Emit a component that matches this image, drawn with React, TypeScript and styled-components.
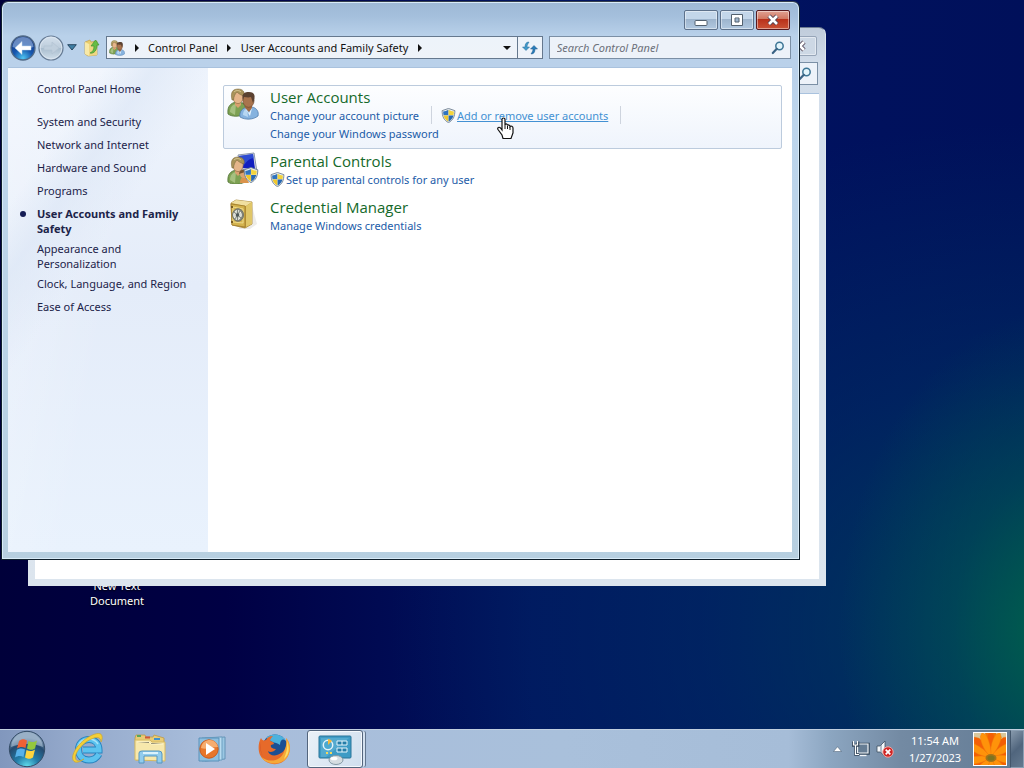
import React from 'react';
import styled, { createGlobalStyle, css } from 'styled-components';

const Global = createGlobalStyle`
  * { box-sizing: border-box; }
  html, body { margin: 0; height: 100%; overflow: hidden; }
  body, button, input {
    font-family: "Noto Sans", "Open Sans", sans-serif;
    font-size: 11px;
    line-height: 15px;
  }
  button { border: 0; padding: 0; background: none; }
  svg { display: block; flex: none; }
`;

const Screen = styled.div`
  display: flex;
  flex-direction: column;
  height: 100vh;
  background:
    radial-gradient(ellipse 22% 42% at 104% 82%, rgba(0, 104, 72, 0.85), rgba(0, 90, 80, 0.4) 50%, transparent 100%),
    radial-gradient(ellipse 62% 66% at 100% 82%, rgba(0, 70, 92, 0.8), rgba(0, 60, 100, 0.4) 50%, transparent 100%),
    linear-gradient(90deg, #00003a 0%, #000044 22%, #001460 52%, #001260 72%, #00105a 100%);
`;

const Desktop = styled.main`
  position: relative;
  flex: 1;
`;

const DesktopFile = styled.button`
  position: absolute;
  left: 77px;
  top: 578px;
  width: 80px;
  color: #fff;
  text-align: center;
  text-shadow: 0 1px 2px #000;
`;

const WindowFrame = styled.section<{ $active?: boolean }>`
  position: absolute;
  display: flex;
  flex-direction: column;
  border-radius: 7px 7px 0 0;
  ${({ $active }) => $active ? css`
    top: 1px;
    left: 1px;
    right: 224px;
    bottom: 169px;
    padding: 0 7px 7px 6px;
    border: 1px solid #10202c;
    border-top-color: #35404e;
    box-shadow: inset 0 0 0 1px #d9ebf8;
    background: linear-gradient(#9db8d5 0, #a4bfdc 14px, #b9d1ea 34px, #bad1ea 66px, #bdd5ec 120px, #b7cfe0 100%);
  ` : css`
    top: 27px;
    left: 28px;
    right: 198px;
    bottom: 143px;
    padding: 0 6px 6px;
    border: 1px solid #dde5ec;
    border-top-color: #6d7c92;
    background: linear-gradient(#c0ccdb 0, #d3deeb 40px, #dce5ee 100%);
  `}
`;

const TitleBar = styled.header`
  display: flex;
  justify-content: flex-end;
  gap: 2px;
  padding: 8px 2px 6px;
`;

const CaptionButton = styled.button<{ $kind?: 'close' | 'faded' }>`
  display: grid;
  place-items: center;
  width: 34px;
  height: 20px;
  border: 1px solid #5d718b;
  border-radius: 2px;
  box-shadow: inset 0 0 0 1px rgba(255, 255, 255, 0.45);
  background: linear-gradient(#c3d6ea 45%, #9db4cd 46%, #b1c8e0);
  ${({ $kind }) => $kind === 'close' && css`
    border-color: #571a20;
    background: linear-gradient(#e0a193 0, #d17660 45%, #b9301a 46%, #cb5236 100%);
  `}
  ${({ $kind }) => $kind === 'faded' && css`
    border-color: #97a5b8;
    background: #cdd8e5;
  `}
`;

const Toolbar = styled.div`
  display: flex;
  align-items: center;
  height: 31px;
  padding: 0 1px 8px 2px;
`;

const RoundNav = styled.div`
  display: flex;
  align-items: center;
  gap: 2px;
`;

const NavButton = styled.button`
  display: grid;
  place-items: center;
`;

const HistoryButton = styled(NavButton)`
  width: 10px;
  margin: 0 7px 0 3px;
`;

const AddressBar = styled.div`
  display: flex;
  flex: 432;
  align-items: center;
  height: 23px;
  margin-left: 6px;
  padding-left: 2px;
  border: 1px solid #65788e;
  background: linear-gradient(#edf3fa, #eef3f9);
`;

const Crumb = styled.a`
  color: #111;
  white-space: nowrap;
  text-decoration: none;
`;

const CrumbArrow = styled.button`
  display: grid;
  place-items: center;
  width: 23px;
  height: 21px;
`;

const DropButton = styled(CrumbArrow)`
  width: 20px;
  margin-left: auto;
`;

const RefreshButton = styled(CrumbArrow)`
  width: 25px;
  border-left: 1px solid #65788e;
`;

const SearchBox = styled.label`
  display: flex;
  flex: 228;
  align-items: center;
  min-width: 0;
  height: 23px;
  margin-left: 6px;
  padding: 0 5px 0 7px;
  border: 1px solid #7b8fa5;
  background: #edf2f9;
`;

const SearchInput = styled.input`
  flex: 1;
  min-width: 0;
  padding: 0;
  border: 0;
  outline: 0;
  background: none;
  font-style: italic;
  &::placeholder { color: #6c7079; opacity: 1; }
`;

const Client = styled.div`
  display: flex;
  flex: 1;
  min-height: 0;
  border-top: 1px solid #a9c2de;
  background: #fff;
`;

const Sidebar = styled.nav`
  width: 200px;
  flex: none;
  padding: 13px 12px 0 29px;
  background:
    linear-gradient(125deg, transparent 18%, rgba(218, 229, 245, 0.6) 27%, transparent 40%),
    linear-gradient(100deg, rgba(255, 255, 255, 0.3), transparent 50%),
    linear-gradient(#f0f5fd 0, #e4ecf9 45%, #e9f2fd 100%);
`;

const SideList = styled.ul`
  display: flex;
  flex-direction: column;
  gap: 5px;
  margin: 18px 0 0;
  padding: 0;
  list-style: none;
`;

const SideItem = styled.li<{ $current?: boolean }>`
  position: relative;
  min-height: 18px;
  font-weight: ${({ $current }) => ($current ? 700 : 400)};
  ${({ $current }) => $current && css`
    &::before {
      content: '';
      position: absolute;
      left: -17px;
      top: 5px;
      width: 6px;
      height: 6px;
      border-radius: 50%;
      background: #151c55;
    }
  `}
`;

const SideLink = styled.a`
  color: #1c2349;
  text-decoration: none;
`;

const Content = styled.div`
  flex: 1;
  min-width: 0;
  padding: 17px 10px 0 15px;
`;

const Category = styled.article<{ $hover?: boolean }>`
  display: flex;
  gap: 11px;
  padding: 2px 11px 6px 3px;
  border: 1px solid ${({ $hover }) => ($hover ? '#bccbdd' : 'transparent')};
  border-radius: 2px;
  background: ${({ $hover }) => ($hover ? 'linear-gradient(#fdfeff, #eff4fc)' : 'none')};
`;

const CategoryTitle = styled.h2`
  margin: 0;
  font-family: "Open Sans", "Noto Sans", sans-serif;
  font-size: 15px;
  font-weight: 400;
  line-height: 18px;
`;

const TitleLink = styled.a`
  color: #15692a;
  text-decoration: none;
`;

const Tasks = styled.div`
  display: flex;
  flex-wrap: wrap;
`;

const Task = styled.span<{ $divided?: boolean }>`
  display: flex;
  align-items: center;
  gap: 1px;
  height: 18px;
  ${({ $divided }) => $divided && css`
    margin-right: 9px;
    padding-right: 12px;
    border-right: 1px solid #ced4de;
  `}
`;

const TaskLink = styled.a<{ $hover?: boolean }>`
  color: ${({ $hover }) => ($hover ? '#4391d3' : '#1c5ca8')};
  text-decoration: ${({ $hover }) => ($hover ? 'underline' : 'none')};
`;

const Pointer = styled.svg`
  position: absolute;
  left: 496px;
  top: 117px;
`;

const Taskbar = styled.footer`
  display: flex;
  align-items: stretch;
  height: 39px;
  border-top: 1px solid #c0cfdf;
  background: linear-gradient(90deg, #8197bd 0, #94a9cb 7%, #a8bddb 20%, #a9c0db 55%, #a6bdd8 77%, #8ca6c1 81%, #738aa3 88%, #637b94 100%);
`;

const StartButton = styled.button`
  display: grid;
  place-items: center;
  width: 57px;
  padding-right: 4px;
`;

const TaskButton = styled.button<{ $active?: boolean }>`
  display: grid;
  place-items: center;
  width: 62px;
  ${({ $active }) => $active && css`
    width: 56px;
    margin-left: 2px;
    border: 1px solid #53657d;
    border-radius: 3px;
    box-shadow: inset 0 0 0 1px #f4f8fc, 3px 0 0 -1px #d3e0ef, 4px 0 0 -1px #61758e;
    background: linear-gradient(120deg, #eaf1f8, #cfdeee);
  `}
`;

const Tray = styled.div`
  display: flex;
  align-items: center;
  margin-left: auto;
`;

const TrayButton = styled.button`
  display: grid;
  place-items: center;
  width: 24px;
  height: 30px;
`;

const Clock = styled.button`
  width: 72px;
  margin: 0 2px;
  color: #fff;
  line-height: 17px;
  text-align: center;
`;

const ShowDesktop = styled.button`
  align-self: stretch;
  width: 14px;
  margin-left: 3px;
  border: 1px solid #8b9fb3;
  border-left-color: #43566b;
  background: linear-gradient(135deg, #8799ac, #50657d 50%, #64798f);
`;

function Shield({ size = 15 }: { size?: number }) {
  return (
    <svg width={size} height={size} viewBox="0 0 16 16">
      <path d="M8 .5 14.8 2.8C14.8 9 13 13 8 15.6 3 13 1.2 9 1.2 2.8Z" fill="#e8edf2" stroke="#68798b" strokeWidth=".9" />
      <path d="M7.9 1.9V7.8H2.7C2.4 6.5 2.3 5 2.3 3.8 4.300 3.600 6.200 2.900 7.900 1.900Z" fill="#2f73bf" />
      <path d="M8.100 1.900C9.800 2.900 11.700 3.600 13.700 3.800 13.700 5 13.600 6.500 13.300 7.800H8.100Z" fill="#f4d43c" />
      <path d="M2.700 8H7.900V14.400C5.200 13 3.500 11 2.700 8Z" fill="#efc72e" />
      <path d="M13.300 8H8.100V14.400C10.800 13 12.500 11 13.300 8Z" fill="#2767b1" />
    </svg>
  );
}

function GreenPerson() {
  return (
    <g>
      <path d="M1 26C0 18 4 15 9 14L16 15C19 18 19 23 18 26C12 29 5 29 1 26Z" fill="#7da153" stroke="#4f7135" strokeWidth=".8" />
      <path d="M3 24C3 19 6 16 9 16L8 27Z" fill="#a5c080" />
      <path d="M8 13H14V17L11 20 8 17Z" fill="#d9a06f" />
      <ellipse cx="11" cy="9" rx="5.200" ry="6.600" fill="#e5b58a" stroke="#8c683f" strokeWidth=".6" />
      <path d="M5 12C3 4 6 1 11 1S18 4 17 8C13 7 11 5 10 4 8 6 7 8 6.500 12Z" fill="#a99359" stroke="#77643a" strokeWidth=".5" />
      <path d="M7 4C9 2 12 2 14 4" stroke="#d8ca97" fill="none" />
    </g>
  );
}

function Users({ size = 32 }: { size?: number }) {
  return (
    <svg width={size} height={size} viewBox="0 0 32 32">
      <GreenPerson />
      <path d="M13 29C12 23 16 20 20 19H25C30 20 32 24 31 28C26 32 18 32 13 29Z" fill="#86b3df" stroke="#537eac" strokeWidth=".8" />
      <path d="M16 27C16 23 18 21 20 21L21 29Z" fill="#b7d7f2" />
      <path d="M18 17H25V20L22 24 18 20Z" fill="#a06a43" />
      <path d="M18 20 22 25 25 20 23 28Z" fill="#e7f3fb" />
      <ellipse cx="21.500" cy="12.500" rx="5.600" ry="6.800" fill="#a9744d" stroke="#6b452e" strokeWidth=".6" />
      <path d="M16 12C14 5 18 4 22 4C28 4 29 8 26 15L24 9C21 10 19 9 17 9Z" fill="#5b4231" />
    </svg>
  );
}

function Parental() {
  return (
    <svg width="32" height="32" viewBox="0 0 32 32">
      <path d="M11 3 27 1 30 20 14 17Z" fill="#d9dce4" stroke="#8995ab" />
      <path d="M12 4 26 2 28 17 15 16Z" fill="#111fc0" />
      <path d="M12 4 26 2 27 6C19 7 19 13 15 14Z" fill="#3f65db" opacity=".65" />
      <g transform="translate(0 4)"><GreenPerson /></g>
      <path d="M13 31C13 27 15 24 19 25L22 31Z" fill="#da934b" />
      <circle cx="17" cy="22" r="4" fill="#dba370" />
      <path d="M12 22C12 17 21 16 21 22L18 20Z" fill="#79542f" />
      <g transform="translate(16 15)"><Shield size={16} /></g>
    </svg>
  );
}

function Safe() {
  return (
    <svg width="32" height="32" viewBox="0 0 32 32">
      <path d="M25 8 30 26 23 31H11Z" fill="#ccc9bf" opacity=".35" />
      <path d="M4 5 9 2 25 4 25 26 18 30 5 27Z" fill="#bc9637" stroke="#a58436" strokeWidth=".8" />
      <path d="M4 5 9 2 25 4 19 8Z" fill="#f0dfa0" />
      <path d="M4 6 18 8V29L5 27Z" fill="#d4b34e" stroke="#9b792b" strokeWidth=".7" />
      <path d="M19 8 25 4V26L19 29Z" fill="#e0c668" />
      <path d="M6 9 16 11V25L6 24Z" fill="none" stroke="#edda8a" />
      <ellipse cx="11" cy="17" rx="5.500" ry="6.300" fill="#81847a" stroke="#74756a" />
      <ellipse cx="10.500" cy="17" rx="3.800" ry="4.500" fill="#d2d5cd" stroke="#f2f3eb" />
      <path d="M7 14 14 20M13 13 8 21M10.500 12V22" stroke="#7e867f" />
      <circle cx="10.500" cy="17" r="1.700" fill="#4c5657" />
      <path d="M4 9H6M4 24H6" stroke="#785b22" strokeWidth="2" />
    </svg>
  );
}

function Magnifier() {
  return (
    <svg width="14" height="14" viewBox="0 0 14 14" fill="none">
      <circle cx="8.500" cy="5" r="3.700" fill="#e2f4fb" stroke="#3d7595" strokeWidth="1.500" />
      <path d="M5.800 7.800 1.800 12" stroke="#3a6384" strokeWidth="2.200" strokeLinecap="round" />
    </svg>
  );
}

function RightTriangle() {
  return <svg width="4" height="8" viewBox="0 0 4 8"><path d="M0 0 4 4 0 8Z" fill="#111" /></svg>;
}

function BackOrb() {
  return (
    <svg width="26" height="26" viewBox="0 0 26 26">
      <defs>
        <radialGradient id="backFill" cx="50%" cy="92%" r="80%"><stop stopColor="#4fc5f1" /><stop offset=".5" stopColor="#1656ae" /><stop offset="1" stopColor="#173b87" /></radialGradient>
      </defs>
      <circle cx="13" cy="13" r="12" fill="url(#backFill)" stroke="#506986" strokeWidth="1.300" />
      <path d="M2.500 12C3 6 7 2 13 2S23 6 23.500 12C17 14 9 14 2.500 12Z" fill="#9fbde5" opacity=".6" />
      <path d="M5 13 12 6.500V11H21V15H12V19.500Z" fill="#fff" stroke="#c2d8ee" strokeWidth=".5" />
    </svg>
  );
}

function ForwardOrb() {
  return (
    <svg width="26" height="26" viewBox="0 0 26 26">
      <defs><linearGradient id="forwardFill" x2="0" y2="1"><stop stopColor="#d5e1ed" /><stop offset=".49" stopColor="#bdcddc" /><stop offset=".5" stopColor="#a8bccd" /><stop offset="1" stopColor="#d2e0eb" /></linearGradient></defs>
      <circle cx="13" cy="13" r="12" fill="url(#forwardFill)" stroke="#667b94" strokeWidth="1.200" />
      <circle cx="13" cy="13" r="10.800" fill="none" stroke="#dfe9f2" strokeWidth=".8" />
      <path d="M21 13 14 7V11H6V15H14V19Z" fill="#c0cfdd" stroke="#b3c3d3" strokeWidth=".7" />
    </svg>
  );
}

function FolderUp() {
  return (
    <svg width="16" height="18" viewBox="0 0 16 18">
      <path d="M1 3 6 1 7 3 13 2V16L4 17 1 15Z" fill="#e9ce6e" stroke="#c1a14c" strokeWidth=".7" />
      <path d="M1 3 5 5V17L1 15Z" fill="#f8e9a7" />
      <path d="M5 5 13 3V16L5 17Z" fill="#efd682" />
      <path d="M6 14C9 13 10 10 10 7H7L11.500 1 15 6H13C13 11 10 15 6 14Z" fill="#66bd45" stroke="#429330" strokeWidth=".7" />
    </svg>
  );
}

function StartOrb() {
  return (
    <svg width="38" height="38" viewBox="0 0 38 38">
      <defs><radialGradient id="orbFill" cx="50%" cy="100%" r="82%"><stop stopColor="#62e0ee" /><stop offset=".4" stopColor="#237da9" /><stop offset=".8" stopColor="#254b70" /><stop offset="1" stopColor="#6d89a6" /></radialGradient></defs>
      <circle cx="19" cy="19" r="17.700" fill="url(#orbFill)" stroke="#354d68" />
      <path d="M3 17C4 7 11 2 19 2S34 8 35 17C26 13 12 13 3 17Z" fill="#c5d8e8" opacity=".5" />
      <path d="M11 11C14 8.500 16 9 19 10.500L17.500 18C14.500 16.500 12 16.500 9 18.500Z" fill="#ee6134" />
      <path d="M20.500 11C23 12.500 26 12.500 29 10.500L27 18.500C24 20.500 22 20 19 18.500Z" fill="#93c83d" />
      <path d="M8.800 20C11.500 18 14 18 17 19.500L15.500 27C12.500 25.500 10 25.500 7 27.500Z" fill="#57b1ea" />
      <path d="M18.500 20C21.500 21.500 24 21.500 27 19.500L25 27.500C22 29.500 20 29 17 27.500Z" fill="#ffd43e" />
    </svg>
  );
}

function Explorer() {
  return (
    <svg width="34" height="34" viewBox="0 0 34 34">
      <path d="M2 6 3 3H12L13 5H20L21 3 31 6V27L3 28Z" fill="#e8cb76" stroke="#bc9a46" strokeWidth=".8" />
      <path d="M4 4H8" stroke="#57a65b" strokeWidth="2" />
      <path d="M12 5.500H17" stroke="#cf573a" strokeWidth="2" />
      <path d="M21 7H27" stroke="#4192cb" strokeWidth="2" />
      <path d="M2 8H17L19 10H32V29L2 28Z" fill="#f7e8ac" stroke="#d7ba60" />
      <path d="M4 10H16L18 12H30" stroke="#fff7cf" />
      <path d="M6 31V21Q6 19 9 19H26Q29 19 29 22V31H24V24H11V31Z" fill="#91cced" stroke="#5496c0" />
      <path d="M10 21H25" stroke="#daf2fc" strokeWidth="2" />
    </svg>
  );
}

function InternetExplorer() {
  return (
    <svg width="34" height="34" viewBox="0 0 34 34" fill="none">
      <path d="M28 22C25.500 26.500 22.500 28 18 28C11.500 28 7.500 23.500 7.500 17.500S12 7.500 18 7.500C24 7.500 28 12 28 18H12" stroke="#2582be" strokeWidth="7" />
      <path d="M28 22C25.500 26.500 22.500 28 18 28C11.500 28 7.500 23.500 7.500 17.500S12 7.500 18 7.500C24 7.500 28 12 28 18H12" stroke="#5cc3ef" strokeWidth="5.200" />
      <path d="M7 14C9 9 13 7 18 7C22 7 25 9 27 12" stroke="#a7e2f8" strokeWidth="1.500" />
      <path d="M4 30C-2 27 4 15 13 8C21 2 30-1 31 4C31.500 6 31 8 30 10C30 4 24 4 15 10C6 17 1 27 7 29C9 29 11 28 13 27C10 29 7 31 4 30Z" fill="#f4cf37" stroke="#c6a435" strokeWidth=".7" />
    </svg>
  );
}

function MediaPlayer() {
  return (
    <svg width="32" height="32" viewBox="0 0 32 32">
      <path d="M9 5 29 4V26L9 28Z" fill="#9bc7e3" stroke="#6594b7" />
      <path d="M6 5 26 4V27L6 28Z" fill="#b9dcf0" stroke="#6c9fc1" />
      <path d="M3 5H23V28H3Z" fill="#8dbfdf" stroke="#5a92ba" />
      <circle cx="13" cy="16" r="9.200" fill="#e7762a" stroke="#cb5b1c" />
      <path d="M5 15C6 9 10 7 14 7S21 10 22 14C16 14 10 17 5 15Z" fill="#f6ad70" />
      <path d="M10 10 19 16 10 22Z" fill="#fff" />
    </svg>
  );
}

function Firefox() {
  return (
    <svg width="32" height="32" viewBox="0 0 32 32">
      <circle cx="17" cy="14" r="12.500" fill="#1c4f93" />
      <path d="M8 5C14-1 25 1 28 8C25 5 22 7 22 12C18 9 13 10 11 6Z" fill="#4db2dd" />
      <path d="M3 5C0 10 0 17 2 22C7 32 20 34 27 27C34 20 32 9 28 5C30 12 27 18 23 20C18 24 11 23 10 18C12 20 16 19 18 16C14 16 12 14 13 12L16 11C16 9 13 8 12 8C12 6 14 4 15 3C11 3 9 5 8 7C5 8 4 7 3 5Z" fill="#e66a2a" />
      <path d="M28 5C34 11 33 21 27 27C19 33 8 31 3 24C13 31 23 27 26 19C28 14 29 10 28 5Z" fill="#f5a938" />
      <path d="M29 8C32 15 31 22 26 26C28 20 30 16 29 8Z" fill="#fedd65" />
      <path d="M3 9C2 16 3 22 7 25C4 23 1 17 3 9Z" fill="#c44528" />
    </svg>
  );
}

function ControlPanelIcon() {
  return (
    <svg width="34" height="32" viewBox="0 0 34 32">
      <rect x="1" y="3" width="32" height="22" rx="1" fill="#3e9bc5" stroke="#297499" />
      <path d="M3 5H31L8 24H3Z" fill="#76c1df" opacity=".4" />
      <circle cx="10" cy="12" r="4.700" fill="#4da9d0" stroke="#e6f4f9" strokeWidth="1.500" />
      <path d="M10 12V6A6 6 0 0 1 14 8Z" fill="#f5b73e" />
      <path d="M8 20H10M12 20H14" stroke="#f5d95a" strokeWidth="2" />
      <path d="M19 8H29V12H19ZM19 15H29V19H19ZM24 8V12M24 15V19" fill="#257da8" stroke="#e5f6fc" />
      <ellipse cx="18" cy="27" rx="7" ry="4.500" fill="#d5dde1" stroke="#8499a4" />
      <ellipse cx="16" cy="25.500" rx="3.500" ry="1.800" fill="#fff" />
    </svg>
  );
}

function NetworkIcon() {
  return (
    <svg width="18" height="18" viewBox="0 0 18 18" fill="none">
      <path d="M5 4H16.500V13.500H5Z" stroke="#33465a" strokeWidth="2.600" />
      <path d="M5.500 4H16V13H5.500Z" fill="#667d94" stroke="#f3f7fa" strokeWidth="1.200" />
      <path d="M8 15.500H14.500" stroke="#f3f7fa" strokeWidth="1.300" />
      <path d="M1 1.500V5.500H6V1.500M3.500 5V14.500H7" stroke="#33465a" strokeWidth="2.600" />
      <path d="M1.500 1V5H5.500V1M3.500 5V14.500H7" stroke="#fff" strokeWidth="1.200" />
    </svg>
  );
}

function VolumeIcon() {
  return (
    <svg width="18" height="18" viewBox="0 0 18 18">
      <path d="M1 6H4L9 1V16L4 12H1Z" fill="#f5f8fb" stroke="#3c4e61" strokeWidth=".8" />
      <path d="M5 5V13" stroke="#718396" />
      <circle cx="12" cy="12" r="5.200" fill="#cf2525" stroke="#f1a4a0" />
      <path d="m9.700 9.700 4.600 4.600m0-4.600-4.600 4.600" stroke="#fff" strokeWidth="1.700" />
    </svg>
  );
}

const petals = [0, 40, 80, 120, 160, 200, 240, 280, 320, 20, 60, 100, 140, 180, 220, 260, 300, 340];

function Flower() {
  return (
    <svg width="34" height="34" viewBox="0 0 34 34">
      <rect width="34" height="34" fill="#fff" />
      <svg x="1" y="1" width="32" height="32" viewBox="0 0 32 32">
        <rect width="32" height="32" fill="#ee7709" />
        <path d="M0 0H11L13 7 0 9ZM22 0H32V5L23 7ZM32 10V14L28 13Z" fill="#d9c79c" />
        {petals.map((angle, i) => (
          <path key={angle} transform={`rotate(${angle} 17 24)`} d="M17 24C13 17 12 8 14 1L17-2 20 2C21 9 20 17 17 24Z" fill={i < 9 ? '#f45f05' : '#ff930a'} stroke="#f0780c" strokeWidth=".4" />
        ))}
        <ellipse cx="17" cy="25" rx="5.500" ry="4" fill="#a3741a" />
        <ellipse cx="17" cy="25" rx="3.500" ry="2.500" fill="#7e7420" />
      </svg>
    </svg>
  );
}

function CloseGlyph() {
  return (
    <svg width="14" height="12" viewBox="0 0 14 12">
      <path d="m3 2 8 8m0-8-8 8" stroke="#4d4052" strokeWidth="4.400" />
      <path d="m3 2 8 8m0-8-8 8" stroke="#fff" strokeWidth="2.600" />
    </svg>
  );
}

const sections: { label: string; current?: boolean }[] = [
  { label: 'System and Security' },
  { label: 'Network and Internet' },
  { label: 'Hardware and Sound' },
  { label: 'Programs' },
  { label: 'User Accounts and Family Safety', current: true },
  { label: 'Appearance and Personalization' },
  { label: 'Clock, Language, and Region' },
  { label: 'Ease of Access' },
];

const pinned = [
  { label: 'Internet Explorer', icon: <InternetExplorer /> },
  { label: 'Windows Explorer', icon: <Explorer /> },
  { label: 'Windows Media Player', icon: <MediaPlayer /> },
  { label: 'Firefox', icon: <Firefox /> },
];

function BackgroundWindow() {
  return (
    <WindowFrame aria-label="Background window">
      <TitleBar><CaptionButton $kind="faded" aria-label="Close"><CloseGlyph /></CaptionButton></TitleBar>
      <Toolbar>
        <SearchBox><SearchInput aria-label="Search" /><Magnifier /></SearchBox>
      </Toolbar>
      <Client />
    </WindowFrame>
  );
}

function ControlPanelWindow() {
  return (
    <WindowFrame $active aria-label="User Accounts and Family Safety">
      <TitleBar>
        <CaptionButton aria-label="Minimize">
          <svg width="14" height="12" viewBox="0 0 14 12"><rect x="1" y="6.500" width="12" height="5" rx="1" fill="#fff" stroke="#53616f" /></svg>
        </CaptionButton>
        <CaptionButton aria-label="Maximize">
          <svg width="14" height="12" viewBox="0 0 14 12"><path fillRule="evenodd" d="M1.500.5H12.500V11.500H1.500ZM5 4V8H9V4Z" fill="#fff" stroke="#53616f" /></svg>
        </CaptionButton>
        <CaptionButton $kind="close" aria-label="Close"><CloseGlyph /></CaptionButton>
      </TitleBar>
      <Toolbar>
        <RoundNav>
          <NavButton aria-label="Back"><BackOrb /></NavButton>
          <NavButton aria-label="Forward"><ForwardOrb /></NavButton>
        </RoundNav>
        <HistoryButton aria-label="Recent pages">
          <svg width="10" height="7" viewBox="0 0 10 7"><path d="M.700.700H9.300L5 6Z" fill="#3e7fa5" stroke="#294963" /></svg>
        </HistoryButton>
        <NavButton aria-label="Up"><FolderUp /></NavButton>
        <AddressBar>
          <Users size={16} />
          <CrumbArrow aria-label="Locations"><RightTriangle /></CrumbArrow>
          <Crumb href="#home">Control Panel</Crumb>
          <CrumbArrow aria-label="Control Panel items"><RightTriangle /></CrumbArrow>
          <Crumb href="#family">User Accounts and Family Safety</Crumb>
          <CrumbArrow aria-label="Family Safety items"><RightTriangle /></CrumbArrow>
          <DropButton aria-label="Previous locations">
            <svg width="8" height="4" viewBox="0 0 8 4"><path d="M0 0H8L4 4Z" fill="#111" /></svg>
          </DropButton>
          <RefreshButton aria-label="Refresh">
            <svg width="16" height="14" viewBox="0 0 16 14">
              <path d="M7 1C4 1 3 3 3 6H.500L4 9.500 7.500 6H5C5 4 6 3 7 1Z" fill="#419ac9" stroke="#286c9c" strokeWidth=".5" />
              <path d="M9 13C12 13 13 11 13 8H15.500L12 4.500 8.500 8H11C11 10 10 11 9 13Z" fill="#287db9" stroke="#245b8c" strokeWidth=".5" />
            </svg>
          </RefreshButton>
        </AddressBar>
        <SearchBox><SearchInput aria-label="Search" placeholder="Search Control Panel" /><Magnifier /></SearchBox>
      </Toolbar>
      <Client>
        <Sidebar>
          <SideLink href="#home">Control Panel Home</SideLink>
          <SideList>
            {sections.map(({ label, current }) => (
              <SideItem key={label} $current={current}><SideLink href="#section">{label}</SideLink></SideItem>
            ))}
          </SideList>
        </Sidebar>
        <Content>
          <Category $hover>
            <Users />
            <div>
              <CategoryTitle><TitleLink href="#accounts">User Accounts</TitleLink></CategoryTitle>
              <Tasks>
                <Task $divided><TaskLink href="#picture">Change your account picture</TaskLink></Task>
                <Task $divided><Shield /><TaskLink href="#manage" $hover>Add or remove user accounts</TaskLink></Task>
                <Task><TaskLink href="#password">Change your Windows password</TaskLink></Task>
              </Tasks>
            </div>
          </Category>
          <Category>
            <Parental />
            <div>
              <CategoryTitle><TitleLink href="#parental">Parental Controls</TitleLink></CategoryTitle>
              <Tasks><Task><Shield /><TaskLink href="#setup">Set up parental controls for any user</TaskLink></Task></Tasks>
            </div>
          </Category>
          <Category>
            <Safe />
            <div>
              <CategoryTitle><TitleLink href="#credentials">Credential Manager</TitleLink></CategoryTitle>
              <Tasks><Task><TaskLink href="#vault">Manage Windows credentials</TaskLink></Task></Tasks>
            </div>
          </Category>
        </Content>
      </Client>
    </WindowFrame>
  );
}

export default function App() {
  return (
    <Screen>
      <Global />
      <Desktop>
        <DesktopFile>New Text Document</DesktopFile>
        <BackgroundWindow />
        <ControlPanelWindow />
        <Pointer width="20" height="24" viewBox="0 0 20 24">
          <path d="M6 2.500C6 .500 9 .500 9 2.500V8C9 6.500 11.500 6.500 11.500 8.500 12 7.500 14 8 14 9.500 15 8.500 17 9.500 17 11V16L15 21.500H7L6 18 2 12.500C1 10.500 3 9.500 4.500 11L6 13Z" fill="#fff" stroke="#111" strokeWidth="1.200" />
          <path d="M9 8V12M11.500 9V12M14 10V13" stroke="#111" />
        </Pointer>
      </Desktop>
      <Taskbar>
        <StartButton aria-label="Start"><StartOrb /></StartButton>
        {pinned.map(({ label, icon }) => <TaskButton key={label} aria-label={label}>{icon}</TaskButton>)}
        <TaskButton $active aria-label="Control Panel"><ControlPanelIcon /></TaskButton>
        <Tray>
          <TrayButton aria-label="Show hidden icons">
            <svg width="9" height="6" viewBox="0 0 9 6"><path d="M.500 5.500 4.500.700 8.500 5.500Z" fill="#fff" stroke="#42576c" strokeWidth=".5" /></svg>
          </TrayButton>
          <TrayButton aria-label="Network"><NetworkIcon /></TrayButton>
          <TrayButton aria-label="Volume"><VolumeIcon /></TrayButton>
          <Clock>11:54 AM<br />1/27/2023</Clock>
          <Flower />
          <ShowDesktop aria-label="Show desktop" />
        </Tray>
      </Taskbar>
    </Screen>
  );
}
